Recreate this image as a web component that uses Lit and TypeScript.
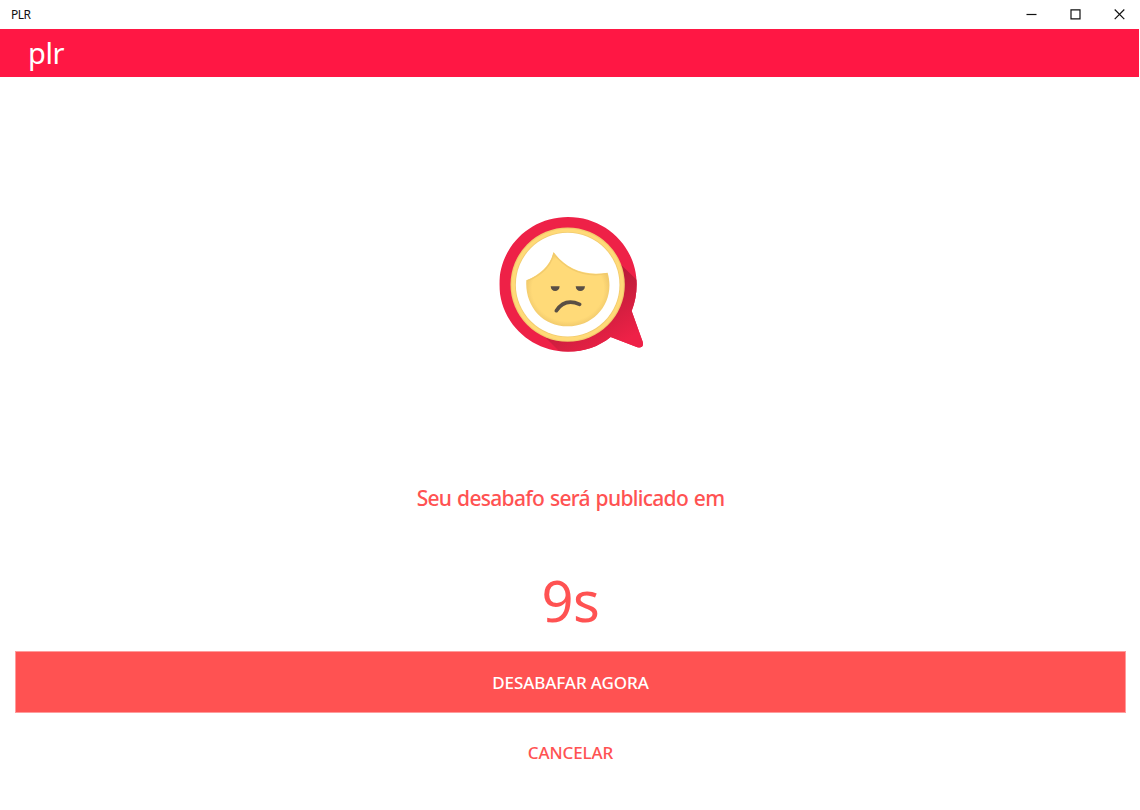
import { LitElement, html, css } from "lit";
import { customElement, property } from "lit/decorators.js";

@customElement("window-bar")
export class WindowBar extends LitElement {
  @property() label = "";

  static styles = css`
    :host {
      display: flex;
      align-items: center;
      justify-content: space-between;
      height: 29px;
      padding-left: 11px;
      box-sizing: border-box;
      background: #fff;
      color: #111;
    }

    .title {
      font-size: 12px;
      line-height: 28px;
      letter-spacing: -0.5px;
    }

    .controls {
      display: flex;
      height: 29px;
    }

    .control {
      display: block;
      width: 44px;
      height: 29px;
      fill: none;
      stroke: #111;
      stroke-width: 1.2;
    }
  `;

  render() {
    return html`
      <span class="title">${this.label}</span>
      <div class="controls">
        <svg class="control" viewBox="0 0 44 29"><path d="M18.5 14.5h10" /></svg>
        <svg class="control" viewBox="0 0 44 29"><path d="M19 9.8h9v9h-9z" /></svg>
        <svg class="control" viewBox="0 0 44 29"><path d="M18.7 9.5l9.6 9.6M28.3 9.5l-9.6 9.6" /></svg>
      </div>
    `;
  }
}

@customElement("sad-balloon")
export class SadBalloon extends LitElement {
  static styles = css`
    :host {
      display: block;
      width: 165px;
      height: 155px;
    }

    .drawing {
      display: block;
      width: 100%;
      height: 100%;
    }
  `;

  render() {
    return html`
      <svg class="drawing" viewBox="0 0 495 465">
        <defs>
          <linearGradient id="shade" gradientUnits="userSpaceOnUse" x1="310" y1="240" x2="410" y2="405">
            <stop offset="0" stop-color="#b71c38" />
            <stop offset="1" stop-color="#ee2147" />
          </linearGradient>
          <radialGradient id="skin">
            <stop offset="0.86" stop-color="#ffda78" />
            <stop offset="1" stop-color="#f2cb6d" />
          </radialGradient>
          <clipPath id="balloon">
            <path
              d="M234 36C348 36 440 126 440 238C440 266 435 293 425 318L458 410Q463 430 442 427L362 396C326 425 282 440 234 440C120 440 28 350 28 238C28 126 120 36 234 36Z"
            />
          </clipPath>
        </defs>
        <g clip-path="url(#balloon)">
          <rect width="495" height="465" fill="#ee2147" />
          <path d="M355 143L495 277V465H234L112 343Z" fill="url(#shade)" />
        </g>
        <circle cx="233" cy="239" r="171.5" fill="#f2cb6d" />
        <circle cx="233" cy="239" r="168" fill="#ffda78" />
        <circle cx="233" cy="239" r="158" fill="#f2cb6d" />
        <circle cx="233" cy="239" r="155.5" fill="#fff" />
        <path
          d="M191 142C228 190 282 215 353 203C377 286 318 364 233 364C156 364 104 301 109 226C150 209 181 181 191 142Z"
          fill="url(#skin)"
        />
        <path
          d="M111 228C153 211 183 182 191 146C228 193 282 218 351 206"
          fill="none"
          stroke="#f2cb6d"
          stroke-width="4"
        />
        <path
          d="M182 244H209C208 254 203 258 195.500 258C188 258 183 254 182 244ZM257 244H285C284 254 279 258 271 258C263 258 258 254 257 244Z"
          fill="#594f45"
        />
        <path
          d="M199 317C217 290 240 285 269 298"
          fill="none"
          stroke="#594f45"
          stroke-width="11"
          stroke-linecap="round"
        />
      </svg>
    `;
  }
}

@customElement("app-root")
export class AppRoot extends LitElement {
  @property({ type: Number }) seconds = 9;

  static styles = css`
    :host {
      display: flex;
      flex-direction: column;
      height: 810px;
      overflow: hidden;
      background: #fff;
      font-family: "Noto Sans", "Open Sans", sans-serif;
    }

    .header {
      display: flex;
      height: 48px;
      padding-left: 28px;
      margin-right: 1px;
      background: #ff1744;
      color: #fff;
    }

    .brand {
      font-size: 29px;
      line-height: 48px;
      letter-spacing: -0.4px;
    }

    .content {
      display: flex;
      flex-direction: column;
      align-items: center;
      padding: 128px 14px 0 15px;
      color: #ff5252;
    }

    .balloon {
      margin-left: 3px;
    }

    .message {
      margin: 122px 0 0;
      font-size: 21px;
      line-height: 32px;
      font-weight: 500;
      letter-spacing: -0.7px;
      word-spacing: 1px;
      white-space: nowrap;
    }

    .counter {
      margin: 46px 0 0;
      font-size: 56px;
      line-height: 80px;
      letter-spacing: -0.5px;
    }

    .button {
      align-self: stretch;
      box-sizing: border-box;
      height: 62px;
      border: 0;
      padding: 0;
      font-family: inherit;
      font-size: 17px;
      font-weight: 500;
      letter-spacing: -0.1px;
      text-transform: uppercase;
      background: none;
      color: #ff5252;
    }

    .primary {
      margin-top: 11px;
      border: 1px solid #ff9c9c;
      background: #ff5252;
      color: #fff;
    }

    .cancel {
      margin-top: 8px;
    }
  `;

  render() {
    return html`
      <window-bar label="PLR"></window-bar>
      <header class="header"><span class="brand">plr</span></header>
      <main class="content">
        <sad-balloon class="balloon"></sad-balloon>
        <p class="message">Seu desabafo será publicado em</p>
        <p class="counter">${this.seconds}s</p>
        <button class="button primary">Desabafar agora</button>
        <button class="button cancel">Cancelar</button>
      </main>
    `;
  }
}
